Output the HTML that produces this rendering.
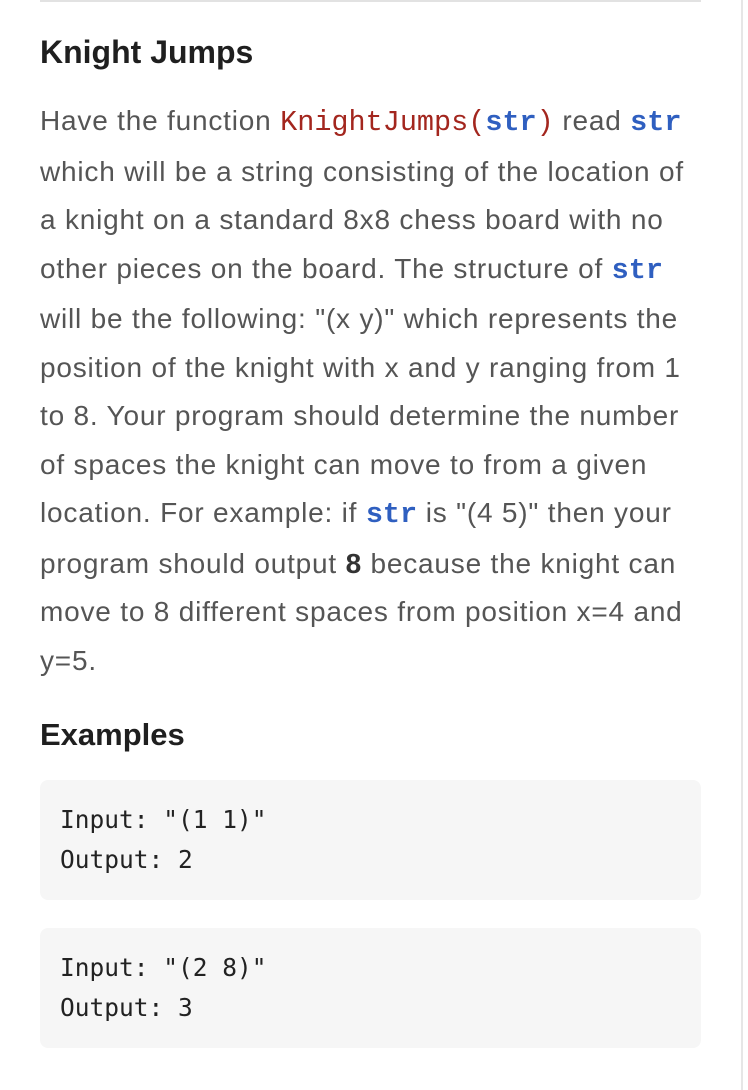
<!DOCTYPE html>
<html><head><meta charset="utf-8"><style>
html,body{margin:0;padding:0;background:#fff;width:748px;height:1090px;overflow:hidden;position:relative;font-family:"Liberation Sans",sans-serif;}
.top{position:absolute;left:40px;top:0;width:661px;height:2px;background:#e2e2e2;}
.rb{position:absolute;left:741px;top:0;width:2px;height:1090px;background:#e6e6e6;}
h1{position:absolute;left:40px;top:30px;margin:0;font-size:32px;font-weight:bold;color:#1f1f1f;line-height:44px;}
.p{position:absolute;left:40px;top:97px;width:700px;font-size:28px;letter-spacing:0.8px;line-height:48.5px;color:#555;white-space:nowrap;}
.fn{font-family:"Liberation Mono",monospace;color:#a3261e;font-size:28.5px;letter-spacing:0;}
.s{font-family:"Liberation Mono",monospace;color:#2f5fc0;font-weight:bold;font-size:28.5px;letter-spacing:0;}
b{color:#333;}
h2{position:absolute;left:40px;top:713px;margin:0;font-size:31px;font-weight:bold;color:#1f1f1f;line-height:44px;}
.code{position:absolute;left:40px;width:661px;height:120px;background:#f6f6f6;border-radius:8px;}
.code pre{margin:0;position:absolute;left:20px;top:20px;font-family:"DejaVu Sans Mono","Liberation Mono",monospace;font-size:24.5px;line-height:40px;color:#222;}
</style></head><body>
<div class="top"></div><div class="rb"></div>
<h1>Knight Jumps</h1>
<div class="p">Have the function <span class="fn">KnightJumps(<span class="s">str</span>)</span> read <span class="s">str</span><br>which will be a string consisting of the location of<br>a knight on a standard 8x8 chess board with no<br>other pieces on the board. The structure of <span class="s">str</span><br>will be the following: "(x y)" which represents the<br>position of the knight with x and y ranging from 1<br>to 8. Your program should determine the number<br>of spaces the knight can move to from a given<br>location. For example: if <span class="s">str</span> is "(4 5)" then your<br>program should output <b>8</b> because the knight can<br>move to 8 different spaces from position x=4 and<br>y=5.</div>
<h2>Examples</h2>
<div class="code" style="top:780px"><pre>Input: "(1 1)"
Output: 2</pre></div>
<div class="code" style="top:928px"><pre>Input: "(2 8)"
Output: 3</pre></div>
</body></html>
